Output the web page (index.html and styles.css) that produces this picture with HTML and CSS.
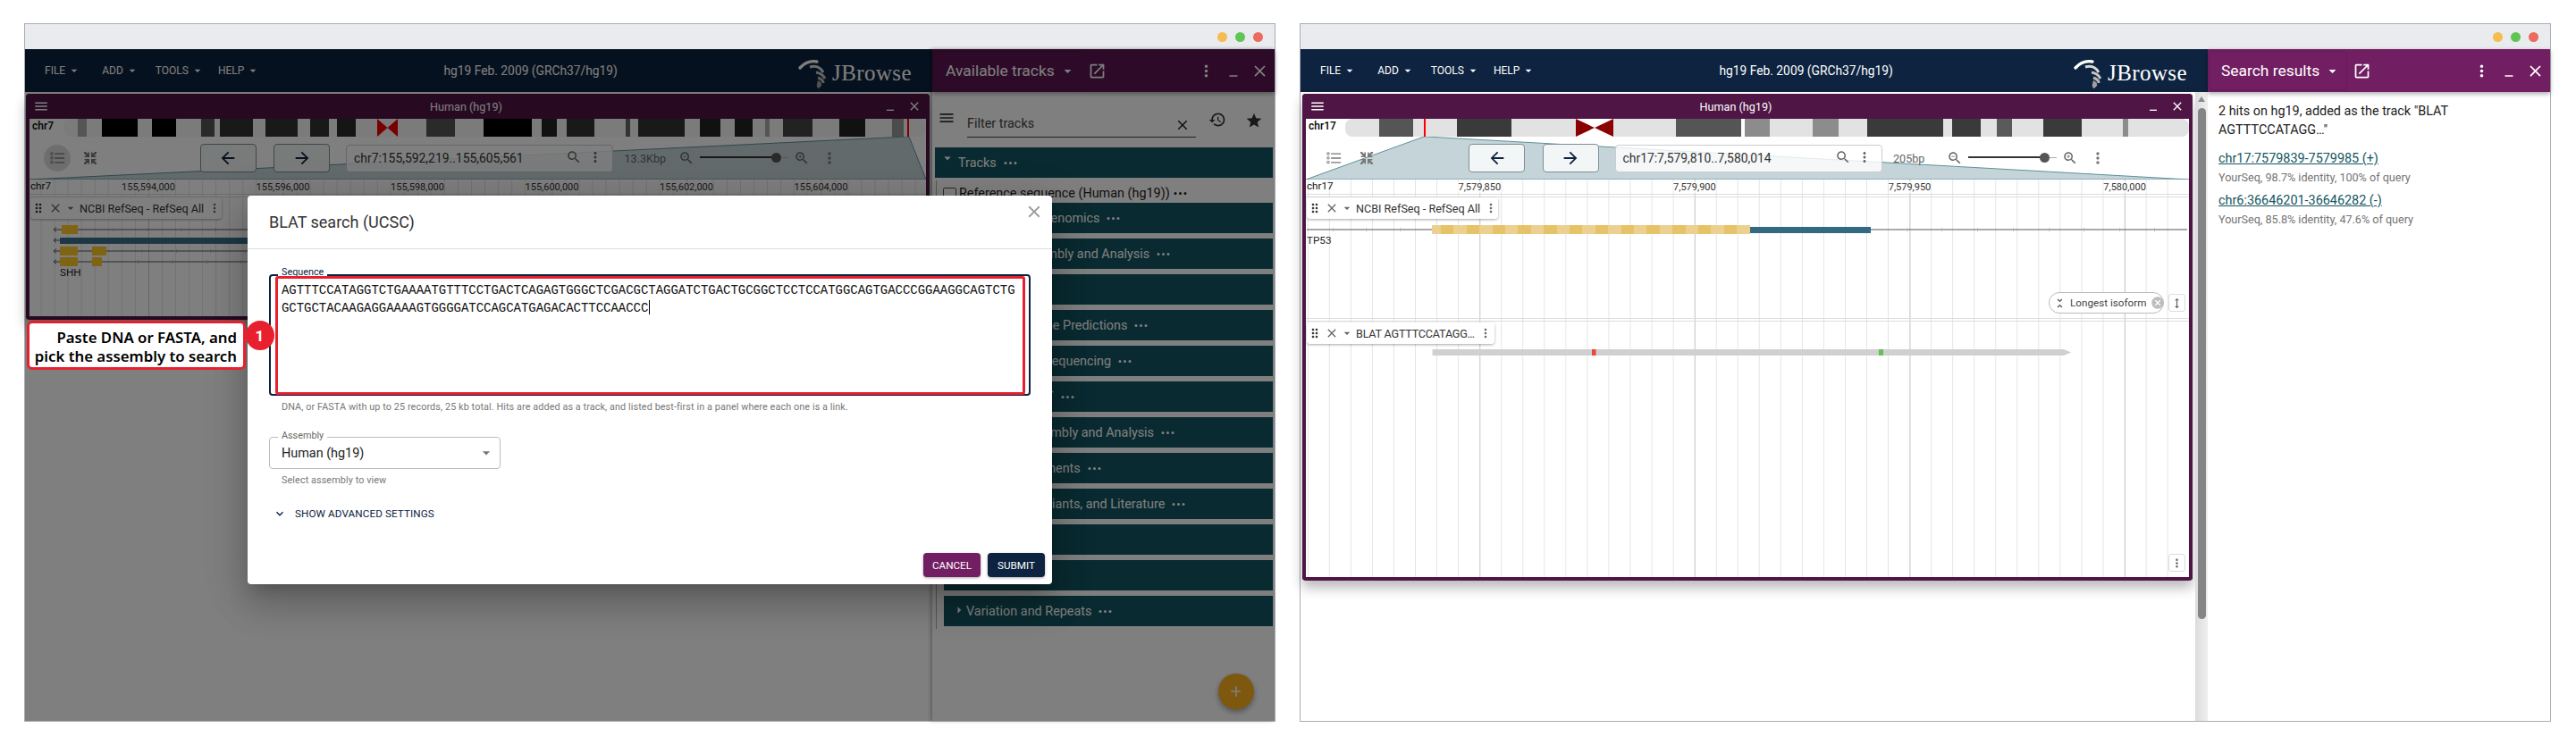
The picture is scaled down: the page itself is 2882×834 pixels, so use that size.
FILE: index.html
```html
<!DOCTYPE html>
<html lang="en">
<head>
  <meta charset="UTF-8" />
  <title>JBrowse BLAT search</title>
  <link rel="stylesheet" href="styles.css">
</head>
<body>
  <svg class="defs" xmlns="http://www.w3.org/2000/svg">
    <symbol id="menu" viewBox="0 0 24 24"><path d="M3 18h18v-2H3v2zm0-5h18v-2H3v2zm0-7v2h18V6H3z"/></symbol>
    <symbol id="close" viewBox="0 0 24 24"><path d="M19 6.41 17.59 5 12 10.59 6.41 5 5 6.41 10.59 12 5 17.59 6.41 19 12 13.41 17.59 19 19 17.59 13.41 12z"/></symbol>
    <symbol id="kebab" viewBox="0 0 24 24"><path d="M12 8c1.1 0 2-.9 2-2s-.9-2-2-2-2 .9-2 2 .9 2 2 2zm0 2c-1.1 0-2 .9-2 2s.9 2 2 2 2-.9 2-2-.9-2-2-2zm0 6c-1.1 0-2 .9-2 2s.9 2 2 2 2-.9 2-2-.9-2-2-2z"/></symbol>
    <symbol id="drop" viewBox="0 0 24 24"><path d="M7 10l5 5 5-5z"/></symbol>
    <symbol id="back" viewBox="0 0 24 24"><path d="M20 11H7.83l5.59-5.59L12 4l-8 8 8 8 1.41-1.41L7.83 13H20v-2z"/></symbol>
    <symbol id="forward" viewBox="0 0 24 24"><path d="M12 4l-1.41 1.41L16.17 11H4v2h12.17l-5.58 5.59L12 20l8-8z"/></symbol>
    <symbol id="search" viewBox="0 0 24 24"><path d="M15.5 14h-.79l-.28-.27C15.41 12.59 16 11.11 16 9.5 16 5.91 13.09 3 9.5 3S3 5.91 3 9.5 5.91 16 9.5 16c1.61 0 3.09-.59 4.23-1.57l.27.28v.79l5 4.99L20.49 19l-4.99-5zm-6 0C7.01 14 5 11.99 5 9.5S7.01 5 9.5 5 14 7.01 14 9.5 11.99 14 9.5 14z"/></symbol>
    <symbol id="zoomin" viewBox="0 0 24 24"><path d="M15.5 14h-.79l-.28-.27C15.41 12.59 16 11.11 16 9.5 16 5.91 13.09 3 9.5 3S3 5.91 3 9.5 5.91 16 9.5 16c1.61 0 3.09-.59 4.23-1.57l.27.28v.79l5 4.99L20.49 19l-4.99-5zm-6 0C7.01 14 5 11.99 5 9.5S7.01 5 9.5 5 14 7.01 14 9.5 11.99 14 9.5 14z"/><path d="M12 10h-2v2H9v-2H7V9h2V7h1v2h2v1z"/></symbol>
    <symbol id="zoomout" viewBox="0 0 24 24"><path d="M15.5 14h-.79l-.28-.27C15.41 12.59 16 11.11 16 9.5 16 5.91 13.09 3 9.5 3S3 5.91 3 9.5 5.91 16 9.5 16c1.61 0 3.09-.59 4.23-1.57l.27.28v.79l5 4.99L20.49 19l-4.99-5zm-6 0C7.01 14 5 11.99 5 9.5S7.01 5 9.5 5 14 7.01 14 9.5 11.99 14 9.5 14z"/><path d="M7 9h5v1H7z"/></symbol>
    <symbol id="launch" viewBox="0 0 24 24"><path d="M19 19H5V5h7V3H5c-1.11 0-2 .9-2 2v14c0 1.1.89 2 2 2h14c1.1 0 2-.9 2-2v-7h-2v7zM14 3v2h3.59l-9.83 9.83 1.41 1.41L19 6.41V10h2V3h-7z"/></symbol>
    <symbol id="minimize" viewBox="0 0 24 24"><path d="M6 19h12v2H6z"/></symbol>
    <symbol id="drag" viewBox="0 0 24 24"><path d="M11 18c0 1.1-.9 2-2 2s-2-.9-2-2 .9-2 2-2 2 .9 2 2zm-2-8c-1.1 0-2 .9-2 2s.9 2 2 2 2-.9 2-2-.9-2-2-2zm0-6c-1.1 0-2 .9-2 2s.9 2 2 2 2-.9 2-2-.9-2-2-2zm6 4c1.1 0 2-.9 2-2s-.9-2-2-2-2 .9-2 2 .9 2 2 2zm0 2c-1.1 0-2 .9-2 2s.9 2 2 2 2-.9 2-2-.9-2-2-2zm0 6c-1.1 0-2 .9-2 2s.9 2 2 2 2-.9 2-2-.9-2-2-2z"/></symbol>
    <symbol id="tracklist" viewBox="0 0 20 16"><path d="M6 1.5h13v1.6H6zM6 7.2h13v1.6H6zM6 12.9h13v1.6H6z"/><path fill="none" stroke="currentColor" d="M1 .8h2.6v2.6H1zM1 6.5h2.6v2.6H1zM1 12.2h2.6v2.6H1z"/></symbol>
    <symbol id="collapse" viewBox="0 0 16 16"><path d="M1 1h1.800l2.600 2.600V1.600H7V7H1.600V5.400h2.400L1 2.400zM15 1h-1.800l-2.600 2.600V1.600H9V7h5.400V5.400H12l3-3zM1 15h1.800l2.600-2.600v2H7V9H1.600v1.600h2.400L1 13.600zM15 15h-1.800l-2.600-2.600v2H9V9h5.400v1.600H12l3 3z"/></symbol>
    <symbol id="history" viewBox="0 0 24 24"><path d="M13 3c-4.97 0-9 4.03-9 9H1l3.89 3.89.07.14L9 12H6c0-3.87 3.13-7 7-7s7 3.13 7 7-3.13 7-7 7c-1.93 0-3.68-.79-4.94-2.06l-1.42 1.42C8.27 19.99 10.51 21 13 21c4.97 0 9-4.03 9-9s-4.03-9-9-9zm-1 5v5l4.28 2.54.72-1.21-3.5-2.08V8H12z"/></symbol>
    <symbol id="star" viewBox="0 0 24 24"><path d="M12 17.27 18.18 21l-1.64-7.03L22 9.24l-7.19-.61L12 2 9.19 8.63 2 9.24l5.46 4.73L5.82 21z"/></symbol>
    <symbol id="unfold" viewBox="0 0 24 24"><path d="M7.41 18.59 8.83 20 12 16.83 15.17 20l1.41-1.41L12 14l-4.59 4.59zm9.18-13.18L15.17 4 12 7.17 8.83 4 7.41 5.41 12 10l4.59-4.59z"/></symbol>
    <symbol id="cancel" viewBox="0 0 24 24"><path d="M12 2C6.47 2 2 6.47 2 12s4.47 10 10 10 10-4.47 10-10S17.53 2 12 2zm5 13.59L15.59 17 12 13.41 8.41 17 7 15.59 10.59 12 7 8.41 8.41 7 12 10.59 15.59 7 17 8.41 13.41 12 17 15.59z"/></symbol>
    <symbol id="more" viewBox="0 0 24 24"><path d="M16.59 8.59 12 13.17 7.41 8.59 6 10l6 6 6-6z"/></symbol>
    <symbol id="plus" viewBox="0 0 24 24"><path d="M19 13h-6v6h-2v-6H5v-2h6V5h2v6h5v2z"/></symbol>
    <symbol id="dots" viewBox="0 0 15 5"><circle cx="2" cy="2.500" r="1.500"/><circle cx="7.500" cy="2.500" r="1.500"/><circle cx="13" cy="2.500" r="1.500"/></symbol>
    <symbol id="height" viewBox="0 0 24 24"><path d="M13 6.990h3L12 3 8 6.990h3v10.020H8L12 21l4-3.990h-3z"/></symbol>
    <symbol id="logo" viewBox="0 0 60 50">
      <path fill="none" stroke="#fff" stroke-width="3.400" stroke-linecap="round" d="M20 22Q28 13 39 15"/>
      <path fill="none" stroke="#d8d8d8" stroke-width="3" d="M31 21Q41 18 46 27"/>
      <path fill="none" stroke="#c4c4c4" stroke-width="3" d="M38 27Q45 28 48 34"/>
      <path fill="none" stroke="#b4b4b4" stroke-width="3" d="M40 33Q46 35 46 39"/>
      <path fill="#a0a0a0" d="M40 36Q45 38 44 42L41 45Q38 44 39 40z"/>
    </symbol>
  </svg>

  <section class="window window-blat">
    <div class="titlebar">
      <i class="dot dot-yellow"></i><i class="dot dot-green"></i><i class="dot dot-red"></i>
    </div>
    <div class="app">
      <div class="column">
        <header class="appbar">
          <nav class="menu">
            <span class="menu-item">FILE<svg class="icon"><use href="#drop"/></svg></span>
            <span class="menu-item">ADD<svg class="icon"><use href="#drop"/></svg></span>
            <span class="menu-item">TOOLS<svg class="icon"><use href="#drop"/></svg></span>
            <span class="menu-item">HELP<svg class="icon"><use href="#drop"/></svg></span>
          </nav>
          <div class="session-name">hg19 Feb. 2009 (GRCh37/hg19)</div>
          <div class="logo"><svg class="logo-mark"><use href="#logo"/></svg><span class="logo-text">JBrowse</span></div>
        </header>
        <main class="main">
          <div class="view view-short">
            <div class="view-header">
              <svg class="icon view-menu"><use href="#menu"/></svg>
              <div class="view-title">Human (hg19)</div>
              <svg class="icon view-min"><use href="#minimize"/></svg>
              <svg class="icon view-close"><use href="#close"/></svg>
            </div>
            <div class="overview">
              <svg class="overview-art" width="1003" height="68">
                <polygon class="zoom-poly" points="0,68 981,20 984,20 1003,68"/>
                <rect x="38" y="0" width="965" height="20" rx="8" fill="#f6f6f6"/>
                <g class="bands">
                  <rect x="54" width="10" height="20" fill="#aaa"/>
                  <rect x="81" width="40" height="20" fill="#000"/>
                  <rect x="137" width="27" height="20" fill="#000"/>
                  <rect x="192" width="15" height="20" fill="#555"/>
                  <rect x="213" width="37" height="20" fill="#333"/>
                  <rect x="264" width="36" height="20" fill="#333"/>
                  <rect x="314" width="21" height="20" fill="#333"/>
                  <rect x="344" width="21" height="20" fill="#2a2a2a"/>
                  <rect x="444" width="32" height="20" fill="#555"/>
                  <rect x="508" width="54" height="20" fill="#000"/>
                  <rect x="573" width="17" height="20" fill="#222"/>
                  <rect x="601" width="31" height="20" fill="#333"/>
                  <rect x="667" width="5" height="20" fill="#666"/>
                  <rect x="681" width="52" height="20" fill="#333"/>
                  <rect x="750" width="23" height="20" fill="#222"/>
                  <rect x="789" width="20" height="20" fill="#222"/>
                  <rect x="823" width="5" height="20" fill="#aaa"/>
                  <rect x="843" width="33" height="20" fill="#444"/>
                  <rect x="906" width="29" height="20" fill="#222"/>
                  <rect x="965" width="13" height="20" fill="#999"/>
                  <rect x="982" width="2" height="20" fill="#f00"/>
                </g>
                <polygon fill="#f00000" points="389,0 400.500,10 412,0 412,20 400.500,10 389,20"/>
              </svg>
              <span class="ideo-label">chr7</span>
              <div class="toolbar">
                <span class="tool tool-active"><svg class="tool-list"><use href="#tracklist"/></svg></span>
                <span class="tool tool-small"><svg class="tool-collapse"><use href="#collapse"/></svg></span>
                <div class="nav nav-wide">
                  <span class="nav-btn"><svg class="icon"><use href="#back"/></svg></span>
                  <span class="nav-btn"><svg class="icon"><use href="#forward"/></svg></span>
                  <div class="locbox">
                    <span class="loc-text">chr7:155,592,219..155,605,561</span>
                    <svg class="icon loc-search"><use href="#search"/></svg>
                    <svg class="icon loc-kebab"><use href="#kebab"/></svg>
                  </div>
                  <span class="bp">13.3Kbp</span>
                  <svg class="icon zoom-icon"><use href="#zoomout"/></svg>
                  <span class="slider"><i class="slider-fill"></i><i class="slider-thumb"></i></span>
                  <svg class="icon zoom-icon"><use href="#zoomin"/></svg>
                  <svg class="icon nav-kebab"><use href="#kebab"/></svg>
                </div>
              </div>
            </div>
            <div class="canvas canvas-wide">
              <div class="ruler">
                <span class="ruler-chr">chr7</span>
                <span class="tick" style="left:133px">155,594,000</span>
                <span class="tick" style="left:283.5px">155,596,000</span>
                <span class="tick" style="left:434px">155,598,000</span>
                <span class="tick" style="left:584.5px">155,600,000</span>
                <span class="tick" style="left:735px">155,602,000</span>
                <span class="tick" style="left:885.5px">155,604,000</span>
              </div>
              <div class="track track-genes">
                <svg class="glyphs" width="320" height="136">
                  <g class="gene-line">
                    <path d="M27 37H320M27 49H320M27 61H320M27 73H320"/>
                    <path d="M30 34.500 27 37 30 39.500M30 46.500 27 49 30 51.500M30 58.500 27 61 30 63.500M30 70.500 27 73 30 75.500"/>
                  </g>
                  <g class="gene-chevrons">
                    <path d="M94 35 92 37 94 39M132 35 130 37 132 39M170 35 168 37 170 39M208 35 206 37 208 39M246 35 244 37 246 39"/>
                    <path d="M126 59 124 61 126 63M165 59 163 61 165 63M203 59 201 61 203 63M242 59 240 61 242 63"/>
                    <path d="M122 71 120 73 122 75M160 71 158 73 160 75M199 71 197 73 199 75M237 71 235 73 237 75"/>
                  </g>
                  <rect x="36" y="32" width="18" height="10" fill="#ffc828"/>
                  <rect x="34" y="46" width="286" height="7" fill="#3a7088"/>
                  <rect x="34" y="56" width="20" height="10" fill="#ffc828"/>
                  <rect x="70" y="56" width="16" height="10" fill="#ffc828"/>
                  <rect x="34" y="68" width="20" height="10" fill="#ffc828"/>
                  <rect x="70" y="68" width="11" height="10" fill="#ffc828"/>
                  <text class="gene-name" x="34" y="89">SHH</text>
                </svg>
                <div class="track-label">
                  <svg class="icon lab-drag"><use href="#drag"/></svg>
                  <svg class="icon lab-close"><use href="#close"/></svg>
                  <svg class="icon lab-drop"><use href="#drop"/></svg>
                  <span class="lab-name">NCBI RefSeq - RefSeq All</span>
                  <svg class="icon lab-kebab"><use href="#kebab"/></svg>
                </div>
              </div>
            </div>
          </div>
        </main>
      </div>
      <aside class="panel panel-tracks">
        <div class="panel-head panel-head-dim">
          <div class="panel-select"><span>Available tracks</span><svg class="icon"><use href="#drop"/></svg></div>
          <svg class="icon panel-launch"><use href="#launch"/></svg>
          <svg class="icon panel-kebab"><use href="#kebab"/></svg>
          <svg class="icon panel-min"><use href="#minimize"/></svg>
          <svg class="icon panel-close"><use href="#close"/></svg>
        </div>
        <div class="filter-row">
          <svg class="icon filter-menu"><use href="#menu"/></svg>
          <div class="filter-field"><span>Filter tracks</span><svg class="icon"><use href="#close"/></svg></div>
          <svg class="icon filter-history"><use href="#history"/></svg>
          <svg class="icon filter-star"><use href="#star"/></svg>
        </div>
        <div class="cat cat-top"><svg class="icon cat-arrow"><use href="#drop"/></svg>Tracks<svg class="cat-dots"><use href="#dots"/></svg></div>
        <div class="tree">
          <div class="ref-row"><i class="check"></i>Reference sequence (Human (hg19))<svg class="cat-dots"><use href="#dots"/></svg></div>
          <div class="cat">Comparative Genomics<svg class="cat-dots"><use href="#dots"/></svg></div>
          <div class="cat">Genome Assembly and Analysis<svg class="cat-dots"><use href="#dots"/></svg></div>
          <div class="cat">Expression<svg class="cat-dots"><use href="#dots"/></svg></div>
          <div class="cat">Genes and Gene Predictions<svg class="cat-dots"><use href="#dots"/></svg></div>
          <div class="cat">Mapping and Sequencing<svg class="cat-dots"><use href="#dots"/></svg></div>
          <div class="cat">mRNA and EST<svg class="cat-dots"><use href="#dots"/></svg></div>
          <div class="cat">Denisova Assembly and Analysis<svg class="cat-dots"><use href="#dots"/></svg></div>
          <div class="cat">Multiple Alignments<svg class="cat-dots"><use href="#dots"/></svg></div>
          <div class="cat">Phenotype, Variants, and Literature<svg class="cat-dots"><use href="#dots"/></svg></div>
          <div class="cat">Regulation<svg class="cat-dots"><use href="#dots"/></svg></div>
          <div class="cat">Other<svg class="cat-dots"><use href="#dots"/></svg></div>
          <div class="cat"><svg class="icon cat-arrow cat-arrow-closed"><use href="#drop"/></svg>Variation and Repeats<svg class="cat-dots"><use href="#dots"/></svg></div>
        </div>
        <span class="fab"><svg class="icon"><use href="#plus"/></svg></span>
      </aside>
    </div>

    <div class="scrim"></div>

    <div class="callout">Paste DNA or FASTA, and<br>pick the assembly to search</div>
    <div class="badge">1</div>

    <div class="modal">
      <div class="modal-head">
        <h2 class="modal-title">BLAT search (UCSC)</h2>
        <svg class="icon modal-close"><use href="#close"/></svg>
      </div>
      <div class="modal-body">
        <div class="seq-field">
          <span class="float-label">Sequence</span>
          <div class="seq-text">AGTTTCCATAGGTCTGAAAATGTTTCCTGACTCAGAGTGGGCTCGACGCTAGGATCTGACTGCGGCTCCTCCATGGCAGTGACCCGGAAGGCAGTCTG<br>GCTGCTACAAGAGGAAAAGTGGGGATCCAGCATGAGACACTTCCAACCC<i class="caret"></i></div>
          <div class="highlight"></div>
        </div>
        <p class="helper helper-seq">DNA, or FASTA with up to 25 records, 25 kb total. Hits are added as a track, and listed best-first in a panel where each one is a link.</p>
        <div class="select-field">
          <span class="float-label">Assembly</span>
          <span class="select-value">Human (hg19)</span>
          <svg class="icon select-arrow"><use href="#drop"/></svg>
        </div>
        <p class="helper helper-select">Select assembly to view</p>
        <div class="advanced"><svg class="icon"><use href="#more"/></svg><span>SHOW ADVANCED SETTINGS</span></div>
      </div>
      <div class="modal-foot">
        <span class="btn btn-cancel">CANCEL</span>
        <span class="btn btn-submit">SUBMIT</span>
      </div>
    </div>
  </section>

  <section class="window window-results">
    <div class="titlebar">
      <i class="dot dot-yellow"></i><i class="dot dot-green"></i><i class="dot dot-red"></i>
    </div>
    <div class="app">
      <div class="column">
        <header class="appbar">
          <nav class="menu">
            <span class="menu-item">FILE<svg class="icon"><use href="#drop"/></svg></span>
            <span class="menu-item">ADD<svg class="icon"><use href="#drop"/></svg></span>
            <span class="menu-item">TOOLS<svg class="icon"><use href="#drop"/></svg></span>
            <span class="menu-item">HELP<svg class="icon"><use href="#drop"/></svg></span>
          </nav>
          <div class="session-name">hg19 Feb. 2009 (GRCh37/hg19)</div>
          <div class="logo"><svg class="logo-mark"><use href="#logo"/></svg><span class="logo-text">JBrowse</span></div>
        </header>
        <main class="main">
          <div class="view view-tall">
            <div class="view-header">
              <svg class="icon view-menu"><use href="#menu"/></svg>
              <div class="view-title">Human (hg19)</div>
              <svg class="icon view-min"><use href="#minimize"/></svg>
              <svg class="icon view-close"><use href="#close"/></svg>
            </div>
            <div class="overview">
              <svg class="overview-art" width="988" height="68">
                <polygon class="zoom-poly" points="0,68 132,20 134,20 988,68"/>
                <rect x="44" y="0" width="944" height="20" rx="8" fill="#e2e2e2"/>
                <g class="bands">
                  <rect x="82" width="38" height="20" fill="#555"/>
                  <rect x="169" width="61" height="20" fill="#3a3a3a"/>
                  <rect x="414" width="73" height="20" fill="#555"/>
                  <rect x="487" width="4" height="20" fill="#fff"/>
                  <rect x="491" width="28" height="20" fill="#8c8c8c"/>
                  <rect x="567" width="29" height="20" fill="#8c8c8c"/>
                  <rect x="628" width="85" height="20" fill="#3a3a3a"/>
                  <rect x="723" width="32" height="20" fill="#3a3a3a"/>
                  <rect x="773" width="17" height="20" fill="#5a5a5a"/>
                  <rect x="825" width="43" height="20" fill="#3a3a3a"/>
                  <rect x="914" width="6" height="20" fill="#8c8c8c"/>
                  <rect x="132" width="2" height="20" fill="#f00"/>
                </g>
                <rect x="302" width="42" height="20" fill="#fff"/>
                <polygon fill="#8b0000" points="302,0 323,10 344,0 344,20 323,10 302,20"/>
              </svg>
              <span class="ideo-label">chr17</span>
              <div class="toolbar">
                <span class="tool"><svg class="tool-list"><use href="#tracklist"/></svg></span>
                <span class="tool tool-small"><svg class="tool-collapse"><use href="#collapse"/></svg></span>
                <div class="nav">
                  <span class="nav-btn"><svg class="icon"><use href="#back"/></svg></span>
                  <span class="nav-btn"><svg class="icon"><use href="#forward"/></svg></span>
                  <div class="locbox">
                    <span class="loc-text">chr17:7,579,810..7,580,014</span>
                    <svg class="icon loc-search"><use href="#search"/></svg>
                    <svg class="icon loc-kebab"><use href="#kebab"/></svg>
                  </div>
                  <span class="bp">205bp</span>
                  <svg class="icon zoom-icon"><use href="#zoomout"/></svg>
                  <span class="slider"><i class="slider-fill"></i><i class="slider-thumb"></i></span>
                  <svg class="icon zoom-icon"><use href="#zoomin"/></svg>
                  <svg class="icon nav-kebab"><use href="#kebab"/></svg>
                </div>
              </div>
            </div>
            <div class="canvas">
              <div class="ruler">
                <span class="ruler-chr">chr17</span>
                <span class="tick" style="left:194.3px">7,579,850</span>
                <span class="tick" style="left:434.9px">7,579,900</span>
                <span class="tick" style="left:675.5px">7,579,950</span>
                <span class="tick" style="left:916.1px">7,580,000</span>
              </div>
              <div class="track track-genes">
                <svg class="glyphs" width="988" height="136">
                  <g class="gene-line"><path d="M1 37H986"/></g>
                  <g class="gene-chevrons">
                    <path d="M31 35 29 37 31 39M68 35 66 37 68 39M106 35 104 37 106 39M673 35 671 37 673 39M712 35 710 37 712 39M752 35 750 37 752 39M792 35 790 37 792 39M832 35 830 37 832 39M871 35 869 37 871 39M911 35 909 37 911 39M950 35 948 37 950 39"/>
                  </g>
                  <rect x="497" y="34" width="135" height="7" fill="#336a82"/>
                  <text class="gene-name" x="1" y="53">TP53</text>
                </svg>
                <div class="cds"></div>
                <div class="track-label">
                  <svg class="icon lab-drag"><use href="#drag"/></svg>
                  <svg class="icon lab-close"><use href="#close"/></svg>
                  <svg class="icon lab-drop"><use href="#drop"/></svg>
                  <span class="lab-name">NCBI RefSeq - RefSeq All</span>
                  <svg class="icon lab-kebab"><use href="#kebab"/></svg>
                </div>
                <div class="chip">
                  <svg class="icon"><use href="#unfold"/></svg>
                  <span>Longest isoform</span>
                  <svg class="icon chip-x"><use href="#cancel"/></svg>
                </div>
                <span class="track-btn track-btn-first"><svg class="icon"><use href="#height"/></svg></span>
              </div>
              <div class="track track-blat">
                <svg class="glyphs" width="988" height="285">
                  <path d="M141.600 32H848L856 35.500 848 39H141.600z" fill="#d0d0d0"/>
                  <rect x="320" y="32" width="4.500" height="7" fill="#f0443c"/>
                  <rect x="641" y="32" width="5" height="7" fill="#63c257"/>
                </svg>
                <div class="track-label track-label-blat">
                  <svg class="icon lab-drag"><use href="#drag"/></svg>
                  <svg class="icon lab-close"><use href="#close"/></svg>
                  <svg class="icon lab-drop"><use href="#drop"/></svg>
                  <span class="lab-name">BLAT AGTTTCCATAGG…</span>
                  <svg class="icon lab-kebab"><use href="#kebab"/></svg>
                </div>
                <span class="track-btn track-btn-last"><svg class="icon"><use href="#kebab"/></svg></span>
              </div>
            </div>
          </div>
          <div class="scrollbar"><i class="scroll-up"></i><i class="scroll-thumb"></i></div>
        </main>
      </div>
      <aside class="panel panel-results">
        <div class="panel-head">
          <div class="panel-select"><span>Search results</span><svg class="icon"><use href="#drop"/></svg></div>
          <svg class="icon panel-launch"><use href="#launch"/></svg>
          <svg class="icon panel-kebab"><use href="#kebab"/></svg>
          <svg class="icon panel-min"><use href="#minimize"/></svg>
          <svg class="icon panel-close"><use href="#close"/></svg>
        </div>
        <div class="results">
          <p class="results-intro">2 hits on hg19, added as the track "BLAT AGTTTCCATAGG…"</p>
          <a class="hit-link" href="#">chr17:7579839-7579985 (+)</a>
          <p class="hit-meta">YourSeq, 98.7% identity, 100% of query</p>
          <a class="hit-link hit-link-second" href="#">chr6:36646201-36646282 (-)</a>
          <p class="hit-meta">YourSeq, 85.8% identity, 47.6% of query</p>
        </div>
      </aside>
    </div>
  </section>
</body>
</html>
```

FILE: styles.css
```css
:root {
  --navy: #0d233f;
  --purple: #721e63;
  --view-purple: #4f1545;
  --teal: #135560;
  --red: #e8202e;
}

* {
  box-sizing: border-box;
}

body {
  margin: 0;
  padding: 26px 27px;
  display: flex;
  gap: 27px;
  background: #fff;
  font-family: Roboto, "Noto Sans", sans-serif;
  color: #222;
  overflow: hidden;
}

.defs {
  display: none;
}

.icon {
  display: block;
  flex: none;
  width: 24px;
  height: 24px;
  fill: currentColor;
}

.window {
  position: relative;
  flex: none;
  display: flex;
  flex-direction: column;
  width: 1400px;
  height: 782px;
  border: 1px solid #a9adb5;
  background: #fff;
}

.titlebar {
  flex: none;
  display: flex;
  justify-content: flex-end;
  align-items: center;
  gap: 9px;
  height: 28px;
  padding-right: 13px;
  background: #e9ebee;
}

.dot {
  width: 11px;
  height: 11px;
  border-radius: 50%;
}

.dot-yellow { background: #f5bd4f; }
.dot-green { background: #61c554; }
.dot-red { background: #ed6a5e; }

.app {
  flex: 1;
  display: flex;
  min-height: 0;
}

.column {
  flex: 1;
  display: flex;
  flex-direction: column;
  min-width: 0;
}

/* top bar */

.appbar {
  flex: none;
  display: flex;
  justify-content: space-between;
  align-items: center;
  height: 48px;
  padding: 0 23px 0 22px;
  background: var(--navy);
  color: #fff;
}

.menu {
  display: flex;
}

.menu-item {
  display: flex;
  align-items: center;
  margin-right: 23px;
  font-size: 12px;
}

.menu-item:nth-child(2) { margin-right: 18px; }
.menu-item:nth-child(3) { margin-right: 15px; }
.menu-item:nth-child(4) { margin-right: 4px; }

.menu-item .icon {
  width: 16px;
  height: 16px;
  margin-left: 2px;
}

.session-name {
  font-size: 13.800px;
}

.logo {
  display: flex;
  align-items: center;
  height: 48px;
}

.logo-mark {
  width: 60px;
  height: 50px;
  margin-right: -17px;
  margin-left: -17px;
}

.logo-text {
  margin-top: 6px;
  margin-left: 13px;
  font-family: "Liberation Serif", serif;
  font-size: 25px;
  letter-spacing: .4px;
}

/* linear genome view */

.main {
  flex: 1;
  display: flex;
  min-height: 0;
  background: #fff;
}

.view {
  flex: none;
  display: flex;
  flex-direction: column;
  margin: 2px 0 0 1px;
  border: 4px solid var(--view-purple);
  border-top: 0;
  border-radius: 4px;
  background: #fff;
  box-shadow: 0 8px 14px rgba(0, 0, 0, .28);
}

.view-short {
  width: 1011px;
  height: 253px;
}

.view-tall {
  width: 996px;
  height: 545px;
  margin-left: 2px;
}

.view-header {
  flex: none;
  display: flex;
  align-items: center;
  height: 28px;
  margin: 0 -4px;
  padding: 0 9px 0 8px;
  border-radius: 4px 4px 0 0;
  background: var(--view-purple);
  color: #fff;
}

.view-menu {
  width: 18px;
  height: 18px;
}

.view-title {
  flex: 1;
  text-align: center;
  font-size: 12.600px;
}

.view-min,
.view-close {
  width: 16px;
  height: 16px;
}

.view-min {
  margin-right: 11px;
  transform: translateY(-1px);
}

.overview {
  position: relative;
  flex: none;
  height: 68px;
  padding-top: 28px;
  background: #fff;
}

.overview-art {
  position: absolute;
  top: 0;
  left: 0;
  display: block;
}

.zoom-poly {
  fill: #c5d4d8;
  stroke: #5f9199;
  stroke-width: 1;
}

.ideo-label {
  position: absolute;
  top: 1px;
  left: 3px;
  font-size: 12px;
  font-weight: 500;
  color: #000;
}

.toolbar {
  position: relative;
  display: flex;
  align-items: center;
  height: 32px;
  padding-left: 16px;
  color: #777;
}

.tool {
  display: flex;
  justify-content: center;
  align-items: center;
  width: 30px;
  height: 30px;
  border-radius: 50%;
}

.tool-active {
  background: #ddd;
}

.tool-list {
  width: 17px;
  height: 14px;
  fill: currentColor;
}

.tool-small {
  width: 22px;
  margin-left: 11px;
}

.tool-collapse {
  width: 16px;
  height: 16px;
  fill: currentColor;
}

.nav {
  display: flex;
  align-items: center;
  margin-left: 103px;
}

.nav-wide {
  margin-left: 111.500px;
}

.nav-btn {
  display: flex;
  justify-content: center;
  align-items: center;
  width: 63px;
  height: 32px;
  margin-right: 19.500px;
  border: 1px solid #7d8f96;
  border-radius: 4px;
  background: #f3f6f7;
  color: var(--navy);
}

.nav-btn + .nav-btn {
  margin-right: 18px;
}

.nav-btn .icon {
  width: 22px;
  height: 22px;
}

.locbox {
  display: flex;
  align-items: center;
  width: 299px;
  height: 31px;
  padding-left: 8px;
  border: 1px solid #ccc;
  border-radius: 4px;
  background: rgba(255, 255, 255, .82);
  color: #333;
}

.loc-text {
  flex: 1;
  font-size: 13.900px;
}

.loc-search {
  width: 18px;
  height: 18px;
  color: #666;
  transform: translateY(-1px);
}

.loc-kebab {
  width: 18px;
  height: 18px;
  margin: 0 10px 0 6px;
  color: #666;
  transform: translateY(-1px);
}

.bp {
  width: 60px;
  margin-left: 12.500px;
  font-size: 12.600px;
  color: #666;
  white-space: nowrap;
}

.zoom-icon {
  width: 18px;
  height: 18px;
  color: #666;
}

.slider {
  position: relative;
  width: 99px;
  height: 10px;
  margin: 0 6px;
}

.slider::before {
  content: "";
  position: absolute;
  top: 4px;
  left: 0;
  right: 0;
  height: 1px;
  background: #aaa;
}

.slider-fill {
  position: absolute;
  top: 3px;
  left: 0;
  width: 84px;
  height: 2px;
  background: #333;
}

.slider-thumb {
  position: absolute;
  top: -1px;
  left: 80px;
  width: 11px;
  height: 11px;
  border-radius: 50%;
  background: #555;
}

.nav-kebab {
  width: 20px;
  height: 20px;
  margin-left: 12px;
}

.canvas {
  position: relative;
  flex: 1;
  min-height: 0;
  overflow: hidden;
  background-color: #fff;
  background-image: linear-gradient(90deg, #ccc 1px, transparent 1px), linear-gradient(90deg, #e4e4e4 1px, transparent 1px);
  background-size: 240.600px 100%, 24.060px 100%;
  background-position: 194.300px 0, 1.800px 0;
}

.canvas-wide {
  background-size: 150.500px 100%, 15.050px 100%;
  background-position: 133px 0, 12.600px 0;
}

.ruler {
  position: relative;
  height: 17px;
  margin-bottom: 2px;
  border-bottom: 1px solid #ddd;
}

.ruler-chr {
  position: absolute;
  left: 1px;
  top: 0;
  font-size: 11.700px;
  color: #111;
}

.tick {
  position: absolute;
  top: 2px;
  transform: translateX(-50%);
  font-size: 11px;
  color: #333;
  background: rgba(255, 255, 255, .7);
}

.track {
  position: relative;
  margin-bottom: 2px;
  border-top: 1px solid #ddd;
}

.track-genes {
  height: 137px;
  border-bottom: 1px solid #ddd;
}

.track-blat {
  height: 287px;
}

.glyphs {
  position: absolute;
  top: -1px;
  left: 0;
  display: block;
}

.gene-line path {
  fill: none;
  stroke: #555;
  stroke-width: 1;
}

.gene-chevrons path {
  fill: none;
  stroke: #bbb;
  stroke-width: 1;
}

.gene-name {
  font-size: 11.700px;
  fill: #222;
}

.cds {
  position: absolute;
  top: 31px;
  left: 141px;
  width: 356px;
  height: 10px;
  background: repeating-linear-gradient(90deg, #ecd08f 0 10px, #e6c268 10px 24.400px, #ecd08f 24.400px 28.800px);
}

.track-label {
  position: absolute;
  top: 0;
  left: 1px;
  display: flex;
  align-items: center;
  width: 214px;
  height: 24px;
  padding-left: 1px;
  border-radius: 4px;
  background: rgba(255, 255, 255, .95);
  box-shadow: 0 1px 3px rgba(0, 0, 0, .35);
  color: #666;
}

.track-label-blat {
  width: 210px;
  top: 1px;
}

.track-label-blat .lab-name {
  letter-spacing: -.2px;
}

.lab-drag {
  width: 16px;
  height: 16px;
  color: #333;
}

.lab-close {
  width: 16px;
  height: 16px;
  margin-left: 3px;
}

.lab-drop {
  width: 16px;
  height: 16px;
  margin-left: 1px;
}

.lab-name {
  margin-left: 2px;
  font-size: 12.600px;
  color: #333;
  white-space: nowrap;
}

.lab-kebab {
  width: 16px;
  height: 16px;
  margin-left: 4px;
}

.chip {
  position: absolute;
  top: 106px;
  right: 28px;
  display: flex;
  align-items: center;
  width: 129px;
  height: 24px;
  padding-left: 4px;
  border: 1px solid #bbb;
  border-radius: 12px;
  background: #fff;
  font-size: 11.700px;
  color: #444;
  white-space: nowrap;
}

.chip .icon {
  width: 15px;
  height: 15px;
  margin-right: 4px;
  color: #555;
}

.chip .chip-x {
  width: 16px;
  height: 16px;
  margin: 0 0 0 5px;
  color: #bdbdbd;
}

.track-btn {
  position: absolute;
  right: 4px;
  display: flex;
  justify-content: center;
  align-items: center;
  width: 19px;
  height: 20px;
  border: 1px solid #ddd;
  border-radius: 3px;
  background: #fff;
  color: #666;
}

.track-btn .icon {
  width: 15px;
  height: 15px;
}

.track-btn-first { top: 108px; }
.track-btn-last { top: 260px; }

.scrollbar {
  position: relative;
  flex: none;
  width: 15px;
  margin-left: 3px;
  height: 100%;
  background: linear-gradient(90deg, #dcdcdc, #f0f0f0);
}

.scroll-up {
  position: absolute;
  top: 5px;
  left: 3px;
  border: 4.500px solid transparent;
  border-top: 0;
  border-bottom: 6px solid #8a8a8a;
}

.scroll-thumb {
  position: absolute;
  top: 18px;
  left: 3px;
  width: 9px;
  height: 572px;
  border-radius: 5px;
  background: #858585;
}

/* side panels */

.panel {
  position: relative;
  flex: none;
  display: flex;
  flex-direction: column;
  width: 383px;
  background: #fff;
}

.panel-tracks {
  box-shadow: -2px 0 4px rgba(0, 0, 0, .25);
}

.panel-head {
  flex: none;
  display: flex;
  align-items: center;
  height: 48px;
  padding: 0 6px 0 1px;
  background: var(--purple);
  box-shadow: 0 2px 5px rgba(0, 0, 0, .35);
  color: #fff;
}

.panel-head-dim {
  background: #5a1650;
}

.panel-select {
  display: flex;
  align-items: center;
  height: 44px;
  padding: 0 6px 0 13px;
  border: 1px solid rgba(0, 0, 0, .12);
  border-radius: 4px;
  font-size: 17.400px;
}

.panel-select .icon {
  width: 19px;
  height: 19px;
  margin-left: 5px;
}

.panel-launch {
  width: 21px;
  height: 21px;
  margin-left: 6px;
  margin-right: auto;
}

.panel-kebab {
  width: 21px;
  height: 21px;
}

.panel-min {
  width: 18px;
  height: 18px;
  margin: 0 10px 0 11px;
}

.panel-close {
  width: 21px;
  height: 21px;
}

.filter-row {
  flex: none;
  display: flex;
  align-items: flex-start;
  height: 62px;
  padding-left: 6px;
  color: #333;
}

.filter-menu {
  width: 20px;
  height: 20px;
  margin-top: 19px;
}

.filter-field {
  display: flex;
  justify-content: space-between;
  align-items: center;
  width: 256px;
  height: 31px;
  margin: 20px 0 0 13px;
  border-bottom: 1px solid #444;
  font-size: 14.400px;
  color: #444;
}

.filter-field .icon {
  width: 18px;
  height: 18px;
  margin: 4px 6px 0 0;
  color: #222;
}

.filter-history {
  width: 20px;
  height: 20px;
  margin: 21px 0 0 14px;
}

.filter-star {
  width: 20px;
  height: 20px;
  margin: 22px 0 0 21px;
}

.cat {
  position: relative;
  display: flex;
  align-items: center;
  height: 34px;
  margin: 0 2px 6px 0;
  padding-left: 25px;
  background: var(--teal);
  font-size: 14.400px;
  color: #fff;
  white-space: nowrap;
}

.cat-top {
  margin: 0 2px 0 3px;
  padding-left: 26px;
}

.cat-dots {
  width: 15px;
  height: 5px;
  margin-left: 8px;
  fill: currentColor;
}

.cat-arrow {
  position: absolute;
  top: 3px;
  left: 5px;
  width: 18px;
  height: 18px;
}

.cat-arrow-closed {
  top: 7px;
  left: 8px;
  transform: rotate(-90deg);
}

.tree {
  margin: 3px 0 0 4px;
  padding-left: 8px;
  height: 502px;
  border-left: 1px solid #aaa;
}

.ref-row {
  display: flex;
  align-items: center;
  height: 25px;
  margin-bottom: 0;
  padding-top: 4px;
  font-size: 14.400px;
  white-space: nowrap;
  color: #222;
}

.ref-row .cat-dots {
  margin-left: 4px;
}

.check {
  flex: none;
  width: 15px;
  height: 14px;
  margin: 0 3px 0 -1px;
  border: 1.500px solid #555;
  border-radius: 2px;
}

.fab {
  position: absolute;
  right: 23px;
  bottom: 13px;
  display: flex;
  justify-content: center;
  align-items: center;
  width: 40px;
  height: 40px;
  border-radius: 50%;
  background: #fbb11d;
  box-shadow: 0 3px 6px rgba(0, 0, 0, .35);
  color: #fff;
}

.fab .icon {
  width: 20px;
  height: 20px;
}

.results {
  padding: 11px 20px 0 12px;
}

.results-intro {
  margin: 0 0 11px;
  font-size: 14.400px;
  line-height: 21px;
  color: #222;
}

.hit-link {
  display: block;
  font-size: 14.400px;
  line-height: 21px;
  color: var(--teal);
}

.hit-link-second {
  margin-top: 7px;
}

.hit-meta {
  margin: 2px 0 0;
  font-size: 12.600px;
  line-height: 17px;
  color: #757575;
}

/* BLAT dialog */

.scrim {
  position: absolute;
  z-index: 1;
  top: 28px;
  left: 0;
  right: 0;
  bottom: 0;
  background: rgba(0, 0, 0, .5);
}

.callout {
  position: absolute;
  z-index: 3;
  top: 332px;
  left: 2px;
  width: 245px;
  height: 55px;
  padding: 5px 7px 0 0;
  border: 3px solid var(--red);
  border-radius: 6px;
  background: #fff;
  text-align: right;
  font-family: "Noto Sans", sans-serif;
  font-size: 16.800px;
  font-weight: 600;
  line-height: 21px;
  color: #000;
  white-space: nowrap;
}

.badge {
  position: absolute;
  z-index: 3;
  top: 332px;
  left: 246.500px;
  display: flex;
  justify-content: center;
  align-items: center;
  width: 32px;
  height: 33px;
  border-radius: 50%;
  background: var(--red);
  font-size: 17px;
  font-weight: 700;
  color: #fff;
}

.modal {
  position: absolute;
  z-index: 2;
  top: 192px;
  left: 249px;
  display: flex;
  flex-direction: column;
  width: 900px;
  height: 435px;
  border-radius: 4px;
  background: #fff;
  box-shadow: 0 11px 15px -7px rgba(0, 0, 0, .2), 0 24px 38px 3px rgba(0, 0, 0, .14), 0 9px 46px 8px rgba(0, 0, 0, .12);
}

.modal-head {
  position: relative;
  flex: none;
  display: flex;
  align-items: center;
  height: 60px;
  padding-left: 24px;
  border-bottom: 1px solid #ddd;
}

.modal-title {
  margin: 0;
  font-size: 18px;
  font-weight: 400;
  color: #333;
}

.modal-close {
  position: absolute;
  top: 7px;
  right: 9px;
  width: 22px;
  height: 22px;
  color: #999;
}

.modal-body {
  flex: 1;
  padding: 28px 24px 0;
}

.seq-field {
  position: relative;
  height: 136px;
  border: 2px solid var(--navy);
  border-radius: 4px;
}

.float-label {
  position: absolute;
  top: -8px;
  left: 9px;
  padding: 0 4px;
  background: #fff;
  font-size: 10.800px;
  line-height: 12px;
  color: #666;
}

.seq-field .float-label {
  top: -10px;
  left: 8px;
  color: var(--navy);
}

.seq-text {
  padding: 6px 0 0 12px;
  font-family: "Liberation Mono", monospace;
  font-size: 13.960px;
  line-height: 20px;
  color: #111;
  white-space: nowrap;
}

.caret {
  display: inline-block;
  width: 1px;
  height: 16px;
  margin-left: 1px;
  vertical-align: -3px;
  background: #000;
}

.highlight {
  position: absolute;
  top: 0;
  left: 5px;
  right: 4px;
  bottom: -1px;
  border: 3px solid var(--red);
  border-radius: 3px;
}

.helper {
  margin: 0;
  padding-left: 14px;
  font-size: 10.800px;
  letter-spacing: .1px;
  color: #777;
}

.helper-seq {
  margin-top: 7px;
  line-height: 12px;
}

.select-field {
  position: relative;
  display: flex;
  align-items: center;
  width: 259px;
  height: 36px;
  margin-top: 27px;
  padding-left: 13px;
  border: 1px solid #bbb;
  border-radius: 4px;
}

.select-value {
  font-size: 14.400px;
  color: #222;
}

.select-arrow {
  position: absolute;
  top: 7px;
  right: 5px;
  width: 20px;
  height: 20px;
  color: #777;
}

.helper-select {
  margin-top: 7px;
  line-height: 12px;
}

.advanced {
  display: flex;
  align-items: center;
  margin-top: 23px;
  padding-left: 4px;
  font-size: 11.700px;
  color: var(--navy);
  letter-spacing: .1px;
}

.advanced .icon {
  width: 16px;
  height: 16px;
  margin-right: 9px;
}

.modal-foot {
  flex: none;
  display: flex;
  justify-content: flex-end;
  gap: 8px;
  padding: 0 8px 8px;
}

.btn {
  display: flex;
  justify-content: center;
  align-items: center;
  width: 64px;
  height: 27px;
  border-radius: 4px;
  box-shadow: 0 1px 3px rgba(0, 0, 0, .35);
  font-size: 11.700px;
  color: #fff;
}

.btn-cancel { background: var(--purple); }
.btn-submit { background: var(--navy); }
```
